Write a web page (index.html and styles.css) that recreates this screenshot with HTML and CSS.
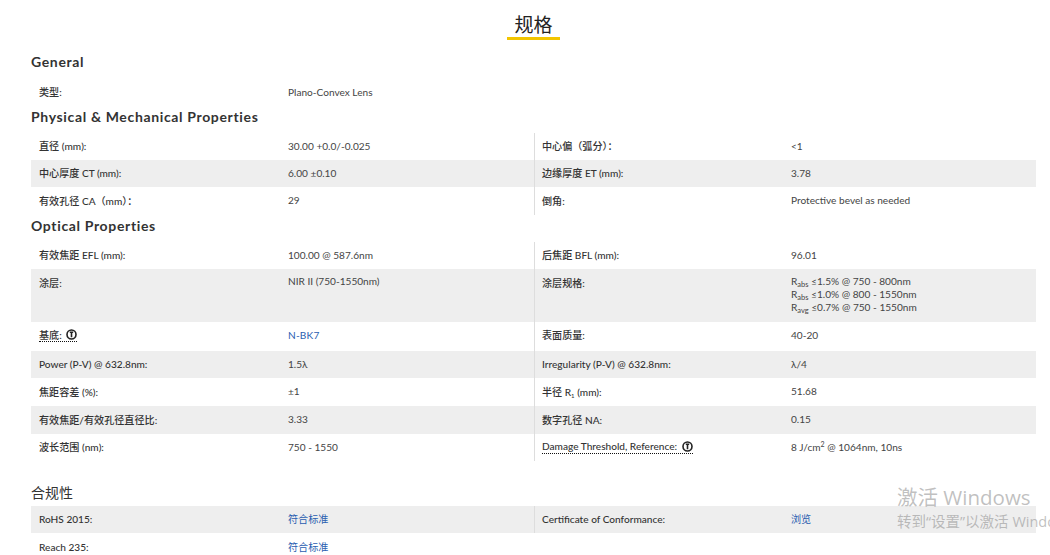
FILE: index.html
```html
<!DOCTYPE html>
<html lang="zh">
<head>
<meta charset="utf-8">
<title>规格</title>
<link rel="stylesheet" href="styles.css">
</head>
<body>
<main class="page">
  <h1 class="title"><span class="title-text">规格</span></h1>

  <h2 class="section section-general">General</h2>
  <div class="row h26"><div class="lbl">类型:</div><div class="val">Plano-Convex Lens</div></div>

  <h2 class="section section-phys">Physical &amp; Mechanical Properties</h2>
  <div class="group">
    <div class="row h27"><div class="lbl">直径 (mm):</div><div class="val">30.00 +0.0/-0.025</div><div class="lbl rl">中心偏（弧分）：</div><div class="val">&lt;1</div></div>
    <div class="row h27 alt"><div class="lbl">中心厚度 CT (mm):</div><div class="val">6.00 ±0.10</div><div class="lbl rl">边缘厚度 ET (mm):</div><div class="val">3.78</div></div>
    <div class="row h28"><div class="lbl">有效孔径 CA（mm）：</div><div class="val">29</div><div class="lbl rl">倒角:</div><div class="val">Protective bevel as needed</div></div>
  </div>

  <h2 class="section section-opt">Optical Properties</h2>
  <div class="group">
    <div class="row h27"><div class="lbl">有效焦距 EFL (mm):</div><div class="val">100.00 @ 587.6nm</div><div class="lbl rl">后焦距 BFL (mm):</div><div class="val">96.01</div></div>
    <div class="row h53 alt top"><div class="lbl">涂层:</div><div class="val">NIR II (750-1550nm)</div><div class="lbl rl">涂层规格:</div><div class="val multi"><div>R<sub>abs</sub> ≤1.5% @ 750 - 800nm</div><div>R<sub>abs</sub> ≤1.0% @ 800 - 1550nm</div><div>R<sub>avg</sub> ≤0.7% @ 750 - 1550nm</div></div></div>
    <div class="row h29"><div class="lbl"><span class="tip">基底: <svg class="info" viewBox="0 0 11 11" aria-hidden="true"><circle cx="5.5" cy="5.5" r="4.5"/><path d="M3.8 3.2h3.4M5.5 3.2v5"/></svg></span></div><div class="val"><a class="link strong" href="#">N-BK7</a></div><div class="lbl rl">表面质量:</div><div class="val">40-20</div></div>
    <div class="row h27 alt"><div class="lbl">Power (P-V) @ 632.8nm:</div><div class="val">1.5λ</div><div class="lbl rl">Irregularity (P-V) @ 632.8nm:</div><div class="val">λ/4</div></div>
    <div class="row h28"><div class="lbl">焦距容差 (%):</div><div class="val">±1</div><div class="lbl rl"><span>半径 R<sub class="s1">1</sub> (mm):</span></div><div class="val">51.68</div></div>
    <div class="row h28 alt"><div class="lbl">有效焦距/有效孔径直径比:</div><div class="val">3.33</div><div class="lbl rl">数字孔径 NA:</div><div class="val">0.15</div></div>
    <div class="row h27"><div class="lbl">波长范围 (nm):</div><div class="val">750 - 1550</div><div class="lbl rl"><span class="tip">Damage Threshold, Reference: <svg class="info" viewBox="0 0 11 11" aria-hidden="true"><circle cx="5.5" cy="5.5" r="4.5"/><path d="M3.8 3.2h3.4M5.5 3.2v5"/></svg></span></div><div class="val">8 J/cm<sup>2</sup> @ 1064nm, 10ns</div></div>
  </div>

  <h2 class="section section-comp">合规性</h2>
  <div class="group">
    <div class="row h27 alt"><div class="lbl">RoHS 2015:</div><div class="val"><a class="link" href="#">符合标准</a></div><div class="lbl rl">Certificate of Conformance:</div><div class="val"><a class="link" href="#">浏览</a></div></div>
    <div class="row h27 last"><div class="lbl">Reach 235:</div><div class="val"><a class="link" href="#">符合标准</a></div></div>
  </div>
</main>
<div class="watermark">
  <div class="wm-1">激活 Windows</div>
  <div class="wm-2">转到“设置”以激活 Windows。</div>
</div>
</body>
</html>
```

FILE: styles.css
```css
* { box-sizing: border-box; }
html, body { margin: 0; padding: 0; height: 555px; overflow: hidden; background: #fff; }
body {
  font-family: "Lato", "Noto Sans CJK SC", sans-serif;
  font-size: 10.1px;
  color: #333;
}
.page { width: 1050px; padding: 0 14px 0 31px; }
.title { margin: 0; height: 41px; padding-top: 11px; text-align: center; font-weight: 400; font-size: 19px; line-height: 25px; color: #222; font-family: "Noto Sans CJK SC", sans-serif; }
.title-text { display: inline-block; height: 29px; padding: 0 7px; border-bottom: 3px solid #f2c500; }
.section { margin: 0; font-weight: 700; font-size: 14px; line-height: 18px; color: #333; letter-spacing: 0.65px; }
.section-general { padding-top: 12px; height: 38px; }
.section-phys { height: 28px; padding-top: 3px; }
.section-opt { height: 27px; padding-top: 2px; }
.section-comp { font-weight: 400; letter-spacing: 0; height: 45px; padding-top: 23px; }
.row { display: grid; grid-template-columns: 257px 246px 257px 245px; align-items: center; width: 1005px; }
.h26 { height: 26px; }
.h27 { height: 27px; }
.h28 { height: 28px; }
.h29 { height: 29px; }
.h53 { height: 53px; }
.alt { background: #eee; }
.lbl { padding-left: 8px; padding-bottom: 2px; color: #333; font-weight: 500; align-self: stretch; display: flex; align-items: center; }
.val { color: #444; margin-bottom: 2px; }
.h29 .lbl { padding-bottom: 4px; }
.h29 .val { margin-bottom: 4px; }
.h26 .lbl { padding-bottom: 1px; }
.h26 .val { margin-bottom: 1px; }
.last .lbl { padding-bottom: 0; }
.last .val { margin-bottom: 0; }
.top { align-items: start; }
.top > .val { margin-bottom: 0; padding-top: 6px; }
.top > .lbl { align-items: flex-start; padding-top: 6px; }
.rl { border-left: 1px solid #ddd; padding-left: 7px; }
.top > .multi { line-height: 13px; padding-top: 6px; }
.multi sub { font-size: 7.5px; line-height: 0; vertical-align: -2px; }
.lbl sub.s1 { font-size: 6px; line-height: 0; vertical-align: -2px; }
sup { font-size: 7px; line-height: 0; vertical-align: 4px; }
.link { color: #2a5db0; text-decoration: none; }
.strong { letter-spacing: 0.2px; }
.tip { border-bottom: 1px dotted #111; display: inline-flex; align-items: center; gap: 2px; height: 14px; white-space: pre; }
.info { width: 11px; height: 11px; flex: none; }
.info circle { fill: #fff; stroke: #222; stroke-width: 1.6; }
.info path { fill: none; stroke: #222; stroke-width: 1.6; }
.watermark { position: absolute; left: 897px; top: 484px; width: 153px; overflow: hidden; white-space: nowrap; color: rgba(130,130,130,0.5); font-family: "Open Sans", "Noto Sans CJK SC", sans-serif; }
.wm-1 { font-size: 20.5px; line-height: 26px; }
.wm-2 { font-size: 14.5px; line-height: 20px; margin-top: 2px; }
```
